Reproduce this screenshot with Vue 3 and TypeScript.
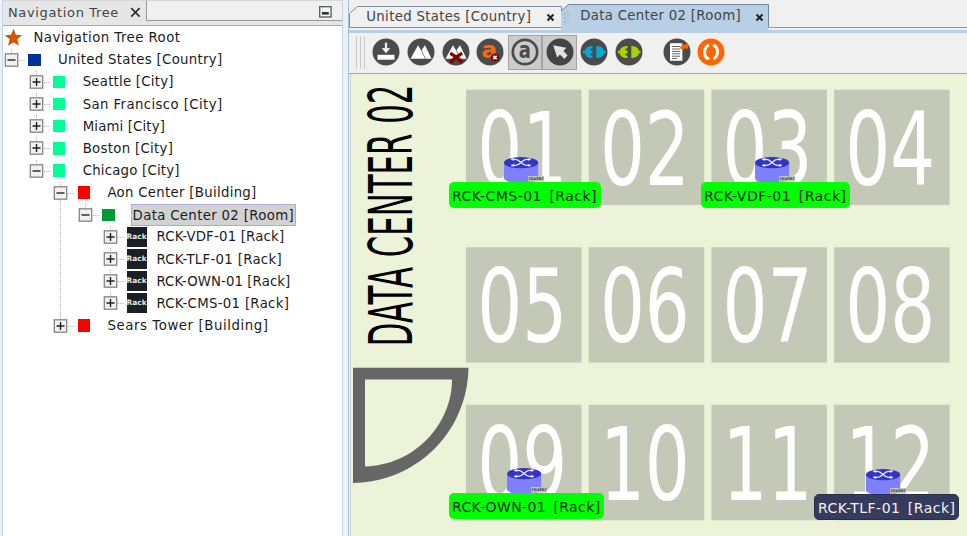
<script setup lang="ts">
interface TreeNode {
  label: string
  level: number
  kind: 'root' | 'country' | 'city' | 'building' | 'room' | 'rack'
  width: number
  open?: boolean
  selected?: boolean
}

interface RackNode {
  label: string
  x: number
  y: number
  boxWidth: number
  textWidth: number
  icon: number
  selected?: boolean
}

const nodes: TreeNode[] = [
  { label: 'Navigation Tree Root', level: 0, kind: 'root', width: 147 },
  { label: 'United States [Country]', level: 1, kind: 'country', width: 164.4 },
  { label: 'Seattle [City]', level: 2, kind: 'city', width: 91 },
  { label: 'San Francisco [City]', level: 2, kind: 'city', width: 139.8 },
  { label: 'Miami [City]', level: 2, kind: 'city', width: 82.4 },
  { label: 'Boston [City]', level: 2, kind: 'city', width: 90.6 },
  { label: 'Chicago [City]', level: 2, kind: 'city', width: 97, open: true },
  { label: 'Aon Center [Building]', level: 3, kind: 'building', width: 149.2, open: true },
  { label: 'Data Center 02 [Room]', level: 4, kind: 'room', width: 161.4, open: true, selected: true },
  { label: 'RCK-VDF-01 [Rack]', level: 5, kind: 'rack', width: 128 },
  { label: 'RCK-TLF-01 [Rack]', level: 5, kind: 'rack', width: 125.6 },
  { label: 'RCK-OWN-01 [Rack]', level: 5, kind: 'rack', width: 134 },
  { label: 'RCK-CMS-01 [Rack]', level: 5, kind: 'rack', width: 132.8 },
  { label: 'Sears Tower [Building]', level: 3, kind: 'building', width: 161.2 },
]
nodes[1].open = true

const racks: RackNode[] = [
  { label: 'RCK-CMS-01 [Rack]', x: 449, y: 182.3, boxWidth: 152, textWidth: 145, icon: 55 },
  { label: 'RCK-VDF-01 [Rack]', x: 701, y: 182.3, boxWidth: 149, textWidth: 142.5, icon: 54 },
  { label: 'RCK-OWN-01 [Rack]', x: 449, y: 493, boxWidth: 155.3, textWidth: 148.5, icon: 58 },
  { label: 'RCK-TLF-01 [Rack]', x: 814, y: 494, boxWidth: 144.5, textWidth: 137.5, icon: 51.7, selected: true },
]

const tiles = Array.from({ length: 12 }, (_, i) => ({
  label: String(i + 1).padStart(2, '0'),
  x: 466 + (i % 4) * 122.7,
  y: 89.7 + Math.floor(i / 4) * 157.55,
}))

const pen = document.createElement('canvas').getContext('2d')!

function track(text: string, width: number, size: number, gap = 0) {
  pen.font = `${size}px "DejaVu Sans"`
  const spare = width - gap - pen.measureText(text).width
  return { letterSpacing: `${(spare / text.length).toFixed(3)}px`, wordSpacing: `${gap}px` }
}
</script>

<template>
  <div class="window">
    <aside class="explorer">
      <header class="explorer-head">
        <div class="explorer-tab">
          <span :style="track('Navigation Tree', 111, 13)">Navigation Tree</span>
          <svg width="11" height="11" viewBox="0 0 11 11"><path d="M1.2 1.2l8.4 8.4M9.6 1.2L1.2 9.6" stroke="#333" stroke-width="1.7" /></svg>
        </div>
        <div class="explorer-fill">
          <svg width="13" height="12" viewBox="0 0 13 12"><rect x=".7" y=".7" width="11.4" height="10.3" fill="#f4f4f4" stroke="#555a63" stroke-width="1.3" /><rect x="3" y="6" width="6.8" height="2.6" fill="#333" /></svg>
        </div>
      </header>
      <div class="tree">
        <div v-for="n in nodes" :key="n.label" class="row" :class="['level-' + n.level, n.kind]">
          <svg v-if="n.kind === 'root'" class="star" width="19" height="19" viewBox="0 0 19 19"><path d="M9.5.8l2.4 6 6.3.4-4.9 4 1.7 6.6-5.5-3.6L4 17.8l1.7-6.6-4.9-4 6.3-.4z" fill="#d45500" /></svg>
          <template v-else>
            <svg class="handle" width="23" height="22" viewBox="0 0 23 22">
              <path v-if="!n.label.startsWith('Sears')" d="M7.5 0v5" stroke="#aaa" stroke-dasharray="1 1.3" />
              <path d="M15 11.5h7" stroke="#aaa" stroke-dasharray="1 1.3" />
              <rect x="1.3" y="4.8" width="12.4" height="12.4" fill="#f1f1f1" stroke="#858585" stroke-width="1.3" />
              <path :d="n.open ? 'M3.5 11h8' : 'M3.5 11h8M7.5 7v8'" stroke="#222" stroke-width="1.4" />
            </svg>
            <span v-if="n.kind === 'rack'" class="rack-icon">Rack</span>
            <i v-else class="swatch"></i>
          </template>
          <span class="label" :class="{ selected: n.selected }" :style="track(n.label, n.width, 13.3)">{{ n.label }}</span>
        </div>
        <i class="guide"></i>
      </div>
    </aside>

    <main class="editor">
      <nav class="tabs">
        <div class="tab first">
          <svg class="shape" width="213" height="28" viewBox="0 0 213 28"><path d="M.5 27.5V13.5L8.5 6.5H212.5V27.5z" fill="#f0f0f0" stroke="#7f90a2" /></svg>
          <span :style="track('United States [Country]', 165, 13.3)">United States [Country]</span>
          <svg class="close" width="9" height="9" viewBox="0 0 9 9"><path d="M1.5 1.5l6 6M7.5 1.5l-6 6" stroke="#222" stroke-width="2" /></svg>
        </div>
        <div class="tab second">
          <svg class="shape" width="209" height="33" viewBox="0 0 209 33">
            <path d="M0 33V11L7.5 4.5H207.5V33z" fill="#b8cfe5" />
            <path d="M0 11L7.5 4.5H207.5V27.5" fill="none" stroke="#7186a0" />
            <path d="M4 13v13M7 11v13" stroke="#8299b3" stroke-width="1.2" stroke-dasharray="1.3 3" />
          </svg>
          <span :style="track('Data Center 02 [Room]', 160.6, 13.3)">Data Center 02 [Room]</span>
          <svg class="close" width="9" height="9" viewBox="0 0 9 9"><path d="M1.5 1.5l6 6M7.5 1.5l-6 6" stroke="#222" stroke-width="2" /></svg>
        </div>
        <div class="tab-rest"></div>
      </nav>
      <div class="tab-strip"></div>

      <div class="toolbar">
        <i class="grip"></i>
        <button><svg viewBox="0 0 28 28"><circle cx="14" cy="14" r="13.5" fill="#4b4b4b" /><path d="M5.5 16.8h17v4.9h-17z" fill="#fff" /><path d="M12.8 4.5h2.4v5.6h3.3L14 15.4l-4.5-5.3h3.3z" fill="#fff" stroke="#4b4b4b" stroke-width=".4" /></svg></button>
        <button><svg viewBox="0 0 28 28"><circle cx="14" cy="14" r="13.5" fill="#4b4b4b" /><path d="M3.5 20.8l7.5-13.6 3.2 5.2 3.8-5.2 6.5 13.6z" fill="#fff" /><path d="M14 11.6l4.4 9.2" stroke="#4b4b4b" stroke-width=".7" /></svg></button>
        <button><svg viewBox="0 0 28 28"><circle cx="14" cy="14" r="13.5" fill="#4b4b4b" /><path d="M3.5 20.8l7.5-13.6 3.2 5.2 3.8-5.2 6.5 13.6z" fill="#fff" /><path d="M14 11.6l4.4 9.2" stroke="#4b4b4b" stroke-width=".7" /><path d="M8.2 15.3q6 3 12 9.3M20.2 15.3q-6.2 3-12 9.3" fill="none" stroke="#800000" stroke-width="3.2" /></svg></button>
        <button><svg viewBox="0 0 28 28"><circle cx="14" cy="14" r="13.5" fill="#4b4b4b" /><text x="5.5" y="19.6" font-size="23" fill="#ff6600">a</text><circle cx="19" cy="19.4" r="4" fill="#800000" /><path d="M17.3 17.7l3.4 3.4M20.7 17.7l-3.4 3.4" stroke="#fff" stroke-width="1.5" /></svg></button>
        <button class="on"><svg viewBox="0 0 28 28"><circle cx="14" cy="14" r="12.2" fill="#cbcbcb" stroke="#4b4b4b" stroke-width="2.7" /><text transform="translate(7.8 20) scale(.78 1)" font-size="23" fill="#4b4b4b">a</text></svg></button>
        <button class="on"><svg viewBox="0 0 28 28"><circle cx="14" cy="14" r="13.5" fill="#444" /><path d="M7.2 7.2l13.2 2.6-3 3.1 4.2 4.4-3.2 3.7-4.5-4.6-2.7 3.1z" fill="#e2e2e2" /></svg></button>
        <button><svg viewBox="0 0 28 28"><circle cx="14" cy="14" r="13.5" fill="#4b4b4b" /><path d="M12.5 8v2.4h-2v2.2h2v2.8h-2v2.2h2V20C7.5 20 5 17.9 5 15.2H3v-2.4h2c0-2.4 2.5-4.8 7.5-4.8zM16.3 8c5 0 7.5 2.4 7.5 4.8h1.7v2.4h-1.7c0 2.3-2.5 4.8-7.5 4.8z" fill="#00a9d7" /></svg></button>
        <button><svg viewBox="0 0 28 28"><circle cx="14" cy="14" r="13.5" fill="#4b4b4b" /><path d="M12.5 8v2.4h-2v2.2h2v2.8h-2v2.2h2V20C7.5 20 5 17.9 5 15.2H3v-2.4h2c0-2.4 2.5-4.8 7.5-4.8zM16.3 8c5 0 7.5 2.4 7.5 4.8h1.7v2.4h-1.7c0 2.3-2.5 4.8-7.5 4.8z" fill="#a5d600" /></svg></button>
        <button class="apart"><svg viewBox="0 0 28 28"><circle cx="14" cy="14" r="13.5" fill="#4b4b4b" /><path d="M7 5.2h12.4v17.6H7z" fill="#fff" /><path d="M9 8.5h8M9 11h8M9 13.4h8M9 15.8h8M9 18.2h8M9 20.4h5" stroke="#666" stroke-width="1" /><path d="M17 9.2l2-2.4h2l3.5-1.2 1 2.4-1.2 3-2.2-.7-2.4 1.5-2.2-1z" fill="#ff6600" /></svg></button>
        <button><svg viewBox="0 0 28 28"><circle cx="14" cy="14" r="13.5" fill="#ff6600" /><path d="M12 7.2C6.3 9.2 6.3 18.8 11 20.6M16.3 20.8C21.7 18.8 21.7 9.2 17 7.4" fill="none" stroke="#fff" stroke-width="3" /><path d="M9.3 17.3l4 3.6-3.8 1.2zM18.7 10.7l-4-3.6 3.8-1.2z" fill="#fff" /></svg></button>
      </div>

      <section class="canvas">
        <svg class="floor" viewBox="350 74 617 462" width="617" height="462">
          <text class="title" transform="translate(412 346.2) rotate(-90)" textLength="261.5" lengthAdjust="spacingAndGlyphs">DATA CENTER 02</text>
          <g v-for="t in tiles" :key="t.label">
            <rect :x="t.x" :y="t.y" width="115.5" height="115.4" fill="#c4c8b6" />
            <text class="number" :transform="`translate(${t.x + 11.2} ${t.y + 94.9}) scale(.693 1)`">{{ t.label }}</text>
          </g>
          <path d="M353 367.7H468.5C467 434 415 482 353 483zM365 379.5V466.5C416 465 452 423 452 379.5z" fill="#666" fill-rule="evenodd" />
        </svg>
        <div v-for="r in racks" :key="r.label" class="node" :class="{ picked: r.selected }" :style="{ left: r.x - 350 + 'px', top: r.y - 74 + 'px', width: r.boxWidth + 'px' }">
          <svg class="router" :style="{ left: r.icon + 'px' }" width="42" height="28" viewBox="0 0 42 28">
            <path d="M0 5.5V22Q5 27 17 27T34.2 22V5.5z" fill="#8080ff" />
            <ellipse cx="17.1" cy="5.7" rx="17.1" ry="5.6" fill="#3333c4" />
            <path d="M7.5 2.4h4C16 2.4 18 8.4 22.5 8.4h4M7.5 8.4h4C16 8.4 18 2.4 22.5 2.4h4" fill="none" stroke="#e6e6ff" stroke-width="1.3" />
            <path d="M10.3 1.2L7 2.4l3.3 1.2M10.3 7.1L7 8.4l3.3 1.3M23.7 1.2L27 2.4l-3.3 1.2M23.7 7.1L27 8.4l-3.3 1.3" fill="none" stroke="#e6e6ff" stroke-width=".7" />
            <rect x="24" y="19" width="16" height="5.6" fill="#c2c2c2" />
            <text x="24.5" y="23.3" font-size="4.8" font-weight="bold" fill="#444" textLength="15" lengthAdjust="spacingAndGlyphs">router</text>
          </svg>
          <span class="tag"><span :style="track(r.label, r.textWidth, 14, 2.5)">{{ r.label }}</span></span>
        </div>
      </section>
    </main>
  </div>
</template>

<style>
body {
  margin: 0;
  background: #f0f0f0;
  overflow: hidden;
}
</style>

<style scoped>
.window {
  display: flex;
  box-sizing: border-box;
  width: 967px;
  height: 536px;
  overflow: hidden;
  background: #f0f0f0;
  font-family: "DejaVu Sans", sans-serif;
  font-size: 13.3px;
  color: #1c1c1c;
}
.window * { box-sizing: border-box; white-space: nowrap; }
.explorer {
  width: 341px;
  margin-left: 2px;
  border-left: 1px solid #c3d5ea;
  border-right: 1px solid #c3d5ea;
  background: #fff;
}
.explorer-head {
  display: flex;
  height: 26px;
  border-top: 1px solid #d6d6d6;
  border-bottom: 1px solid #a9a9a9;
  background: #e6e6e6;
}
.explorer-tab {
  display: flex;
  align-items: center;
  justify-content: space-between;
  width: 144px;
  height: 20px;
  padding: 3px 5px 0 5px;
  border-right: 1px solid #999;
  font-size: 13px;
  color: #444;
}
.explorer-fill {
  display: flex;
  flex: 1;
  align-items: center;
  justify-content: flex-end;
  height: 20px;
  padding: 3px 10px 0 0;
  border-bottom: 1px solid #999;
  background: #f0f0f0;
}
.tree { position: relative; padding-top: 0.5px; }
.row {
  display: flex;
  align-items: center;
  height: 22.17px;
}
.level-1 { padding-left: 1px; }
.level-2 { padding-left: 25.6px; }
.level-3 { padding-left: 50.3px; }
.level-4 { padding-left: 75px; }
.level-5 { padding-left: 99.6px; }
.star { margin-right: 10.4px; margin-left: 1px; }
.handle { flex: none; }
.swatch {
  width: 12.4px;
  height: 12.4px;
  margin: 0 17.3px 0 1.4px;
  background: #00ff96;
}
.country .swatch { background: #003399; }
.building .swatch { background: #f00; }
.room .swatch { background: #009933; margin-right: 15.8px; }
.rack-icon {
  width: 20px;
  height: 20px;
  margin: 0 9.8px 0 1px;
  overflow: hidden;
  background: #1a2026;
  color: #e8e8e8;
  font-size: 7.4px;
  font-weight: bold;
  line-height: 19px;
}
.label { height: 18px; padding-top: 0.5px; line-height: 18px; }
.label.selected {
  height: 21.4px;
  padding: 0.4px 1px 0;
  border: 1px solid #acacd2;
  background: #d2d2d2;
  line-height: 20px;
}
.guide {
  position: absolute;
  left: 57px;
  top: 174px;
  height: 119px;
  border-left: 1px dotted #aaa;
}
.editor {
  display: flex;
  flex: 1;
  flex-direction: column;
  margin-left: 5px;
  border-left: 1px solid #a9bdd3;
}
.tabs { display: flex; height: 30px; color: #444; }
.tab { position: relative; display: flex; align-items: flex-start; }
.tab .shape { position: absolute; left: 0; top: 0; }
.tab span { position: relative; line-height: 16px; }
.tab .close { position: relative; }
.first { width: 212px; padding: 8.6px 0 0 17.3px; }
.first .close { margin: 4px 0 0 15px; }
.second { width: 208px; padding: 7.6px 0 0 19.3px; }
.second .close { margin: 5px 0 0 14px; }
.tab-rest { flex: 1; height: 28px; border-bottom: 1px solid #8a97a5; }
.tab-strip { height: 3px; background: #b8cfe5; }
.toolbar {
  display: flex;
  align-items: center;
  height: 41px;
  padding: 0 0 2px 7px;
  border-bottom: 1px solid #a5a5a5;
}
.grip {
  width: 9px;
  height: 33px;
  margin-right: 4px;
  border: solid #c9c9c9;
  border-width: 0 1px;
  background: linear-gradient(90deg, transparent 3px, #c9c9c9 3px, #c9c9c9 4px, transparent 4px);
}
button {
  display: flex;
  align-items: center;
  justify-content: center;
  width: 34.7px;
  height: 35px;
  padding: 0;
  border: 0;
  background: none;
  font-family: "DejaVu Sans", sans-serif;
  font-weight: bold;
}
button svg { width: 28px; height: 28px; flex: none; }
button.on { border: 1px solid #a4a4a4; background: #cbcbcb; }
.apart { margin-left: 12.8px; }
.canvas {
  position: relative;
  flex: 1;
  box-shadow: inset 1px 0 #ccd1cc;
  background: #edf3d8;
}
.canvas { margin-left: 1px; }
.floor { display: block; }
.title { font-size: 60px; fill: #000; }
.number { font-size: 102px; fill: #fff; }
.node { position: absolute; height: 26px; }
.router { position: absolute; top: -25px; }
.tag {
  position: relative;
  display: block;
  height: 26px;
  padding: 0.5px 0 0 3px;
  border-radius: 5px;
  background: #0f0;
  color: #062b06;
  font-size: 14px;
  line-height: 26px;
}
.picked .tag { border: 1px solid #292e4b; background: #363a5c; color: #f2f2f2; line-height: 24px; }
</style>
